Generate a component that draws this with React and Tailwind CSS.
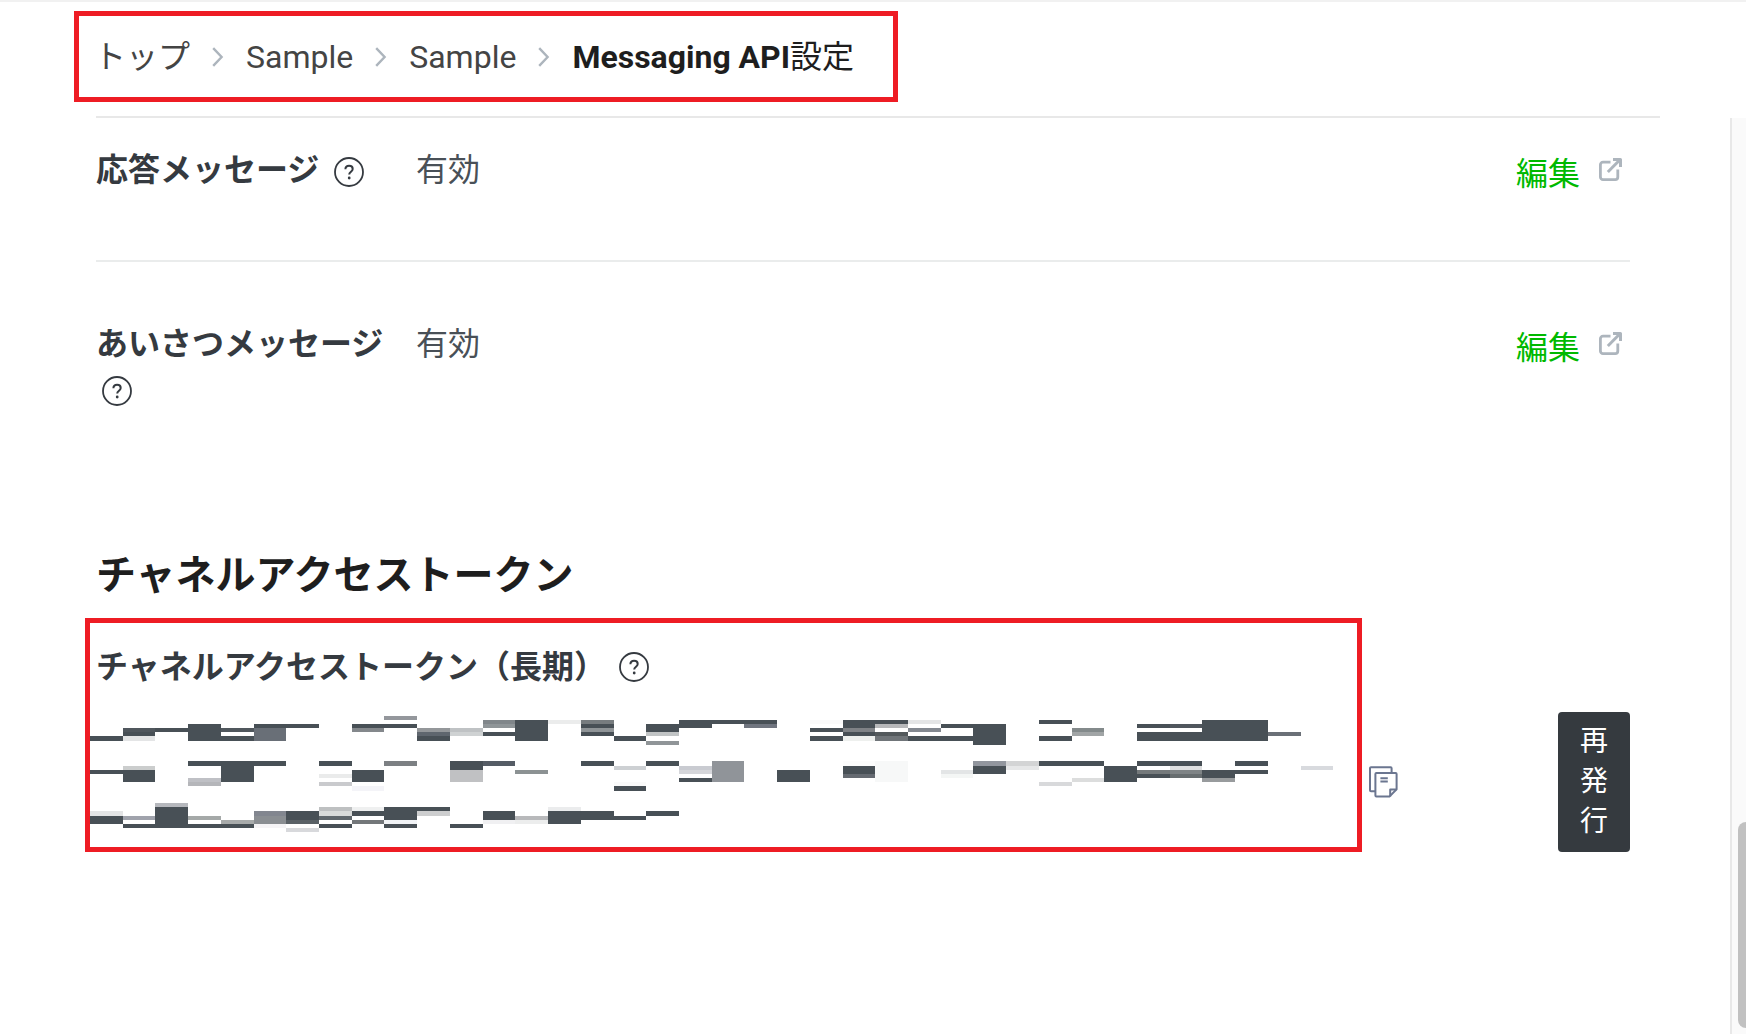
import React from "react";

const D = "#485056";

// Redaction mosaic: [first column, column count, top, bottom, colour]
const MOSAIC = [
  // first line
  [9, 1, 0, 4, "#94979c"],
  [1, 1, 12, 16, "#50575d"], [1, 1, 16, 20, D], [1, 1, 20, 25, "#e4e5e6"],
  [0, 1, 20, 25, D], [2, 1, 12, 16, D], [3, 1, 8, 25, D],
  [4, 1, 12, 16, "#50575d"], [4, 1, 20, 25, D],
  [5, 2, 8, 12, D], [5, 1, 12, 25, "#696f77"],
  [8, 2, 8, 12, D], [8, 1, 12, 16, "#84888c"],
  [10, 1, 12, 16, "#94979a"], [10, 1, 16, 20, "#5f666e"], [10, 1, 20, 25, D],
  [11, 1, 12, 16, "#bfc2c4"], [11, 1, 16, 20, "#cfd2d3"],
  [12, 1, 4, 8, "#80868a"], [12, 1, 8, 12, "#8f9598"], [12, 1, 16, 20, D],
  [13, 1, 4, 25, D], [14, 1, 4, 8, "#ebecec"],
  [15, 1, 4, 8, "#777c7f"], [15, 1, 8, 12, D], [15, 1, 12, 16, "#8f9497"], [15, 1, 16, 20, D],
  [16, 1, 20, 25, D],
  [17, 1, 8, 16, D], [17, 1, 16, 20, "#c1c4c5"], [17, 1, 25, 29, "#909598"],
  [18, 3, 4, 8, D], [18, 1, 8, 12, D], [20, 1, 8, 12, "#70757f"],
  [22, 1, 4, 8, "#fafafa"], [22, 1, 12, 16, D], [22, 1, 20, 25, D],
  [23, 1, 4, 12, D], [23, 1, 12, 16, "#7f8286"], [23, 1, 16, 20, D], [23, 1, 20, 25, "#eef0ee"],
  [24, 1, 4, 8, D], [24, 1, 8, 12, "#b7b8ba"], [24, 1, 16, 20, "#53595c"], [24, 1, 20, 25, "#707579"],
  [25, 1, 4, 8, "#e4e5e6"], [25, 1, 12, 16, "#838890"], [25, 2, 20, 25, D],
  [26, 1, 8, 12, D], [27, 1, 8, 29, D],
  [29, 1, 4, 8, D], [29, 1, 20, 25, D],
  [30, 1, 12, 16, "#838a8b"], [30, 1, 16, 20, "#a1a5a6"],
  [32, 1, 8, 12, D], [33, 1, 8, 12, "#50565d"], [32, 2, 16, 25, D],
  [34, 2, 4, 25, D], [36, 1, 16, 20, "#6b7077"],
  // second line
  [0, 1, 54, 58, D], [1, 1, 50, 54, "#cbcdcd"], [1, 1, 54, 66, D],
  [3, 3, 45, 50, D], [4, 1, 50, 66, D], [3, 1, 62, 66, "#bfc0c5"], [3, 1, 66, 70, "#b5b6ba"],
  [7, 1, 45, 50, D], [7, 1, 58, 62, "#eaebeb"], [7, 1, 66, 70, "#c9cacd"],
  [8, 1, 54, 66, D], [8, 1, 70, 75, "#f4f4f8"], [9, 1, 45, 50, "#7c8083"],
  [11, 1, 45, 54, D], [11, 1, 54, 66, "#c0c1c3"], [12, 1, 45, 50, "#555c65"],
  [13, 1, 54, 58, "#8c9293"], [15, 1, 45, 50, D],
  [16, 1, 50, 54, "#cdd0d3"], [16, 1, 66, 70, "#fafafa"], [16, 1, 70, 75, D],
  [17, 1, 45, 50, D], [18, 1, 50, 54, "#c9cbd1"], [18, 1, 54, 58, "#d5d6da"], [18, 1, 62, 66, D],
  [19, 1, 45, 66, "#909499"], [21, 1, 54, 66, D],
  [23, 1, 45, 50, "#fcfcfc"], [23, 1, 50, 58, D], [23, 1, 58, 62, "#656a71"],
  [24, 1, 45, 66, "#f7f8f8"], [26, 1, 54, 58, "#e3e5e6"], [26, 1, 58, 62, "#f4f6f5"],
  [27, 1, 45, 50, "#92969e"], [27, 1, 50, 58, D],
  [28, 1, 45, 50, "#d3d4d5"], [28, 1, 50, 54, "#e6e7e8"],
  [29, 2, 45, 50, D], [29, 1, 66, 70, "#d8d9db"], [30, 1, 62, 66, "#dcdddd"],
  [31, 1, 50, 66, D],
  [32, 2, 45, 50, D], [32, 1, 54, 58, "#74797b"], [32, 1, 58, 62, D],
  [33, 1, 50, 54, "#dedfe0"], [33, 1, 54, 58, "#7f8486"], [33, 1, 58, 62, "#686e70"],
  [34, 1, 54, 62, D], [34, 1, 62, 66, "#989b9d"],
  [35, 1, 45, 50, D], [35, 1, 54, 58, D], [37, 1, 50, 54, "#d8dade"],
  // third line
  [0, 1, 95, 100, "#e3e4e5"], [0, 1, 100, 108, D],
  [1, 1, 100, 104, "#a0a3ac"], [1, 4, 108, 112, D],
  [2, 1, 87, 91, "#b6b8bd"], [2, 1, 91, 108, D],
  [3, 1, 100, 104, "#a5a9a8"], [4, 1, 104, 108, "#a8abab"],
  [5, 1, 95, 100, "#82868f"], [5, 1, 100, 108, "#8a8e92"], [5, 1, 108, 112, "#f5f4f6"],
  [6, 1, 95, 104, D], [6, 1, 104, 108, "#5a6166"], [6, 1, 112, 116, "#d8d9dc"],
  [7, 1, 91, 95, "#bec0c1"], [7, 1, 95, 100, "#d9dbda"], [7, 1, 100, 104, "#60676c"], [7, 1, 108, 112, D],
  [8, 1, 91, 95, "#eff0f0"], [8, 1, 95, 100, D], [8, 1, 104, 108, "#73777a"],
  [9, 1, 91, 104, D], [9, 1, 104, 108, "#f1f3f6"], [9, 1, 108, 112, D],
  [10, 1, 91, 95, D], [10, 1, 95, 100, "#cdcecf"], [11, 1, 108, 112, D],
  [12, 1, 95, 104, D], [12, 1, 104, 108, "#f0f0f2"],
  [13, 1, 100, 104, "#b8b9bb"], [13, 1, 104, 108, "#eceded"],
  [14, 1, 91, 95, "#ebeced"], [14, 1, 95, 108, D],
  [15, 1, 95, 104, D], [16, 1, 100, 104, D], [17, 1, 95, 100, D],
];

const colX = (i) => Math.round(i * 32.72);

function Mosaic() {
  return (
    <svg width="1244" height="116" viewBox="0 0 1244 116" shapeRendering="crispEdges" className="block max-w-none" role="img" aria-label="Redacted token">
      {MOSAIC.map(([c, n, top, bottom, fill], i) => (
        <rect key={i} x={colX(c)} y={top} width={colX(c + n) - colX(c)} height={bottom - top} fill={fill} />
      ))}
    </svg>
  );
}

function Chevron() {
  return (
    <svg width="12" height="20" viewBox="0 0 12 20" fill="none" stroke="#adb5bd" strokeWidth="2.4" aria-hidden="true">
      <path d="M1.2 1.2 9.6 10 1.2 18.8" />
    </svg>
  );
}

function Help({ className }) {
  return (
    <button type="button" aria-label="ヘルプ" className={className}>
      <svg width="30" height="30" viewBox="0 0 30 30" fill="none" stroke="#353a40" strokeWidth="2" className="block">
        <circle cx="15" cy="15" r="14" strokeWidth="1.8" />
        <path d="M11.4 12.2c0-2.1 1.5-3.5 3.7-3.5s3.6 1.3 3.6 3.2c0 2.6-3.5 2.9-3.5 5.6" />
        <circle cx="15.2" cy="21" r="1.4" fill="#353a40" stroke="none" />
      </svg>
    </button>
  );
}

function EditLink() {
  return (
    <a href="#edit" className="mr-2 flex gap-[19px] leading-[48px] text-[#00b900]">
      <span className="pt-1">編集</span>
      <svg width="23" height="23" viewBox="0 0 23 23" fill="none" stroke="#adb5bd" strokeWidth="2.8" strokeLinejoin="round" className="mt-3" aria-hidden="true">
        <path d="M11.5 4.2H4a2.6 2.6 0 0 0-2.6 2.6v12.2A2.6 2.6 0 0 0 4 21.6h12.2a2.6 2.6 0 0 0 2.6-2.6v-7.6" />
        <path d="M8.8 14 20.5 2.3" strokeWidth="3" />
        <path d="M14 1.5h7.5V9" strokeWidth="3" />
      </svg>
    </a>
  );
}

function CopyIcon() {
  return (
    <svg width="29" height="32" viewBox="0 0 29 32" fill="none" stroke="#6b7690" strokeWidth="2" strokeLinejoin="round" className="block">
      <path d="M6.5 25.2H2a1 1 0 0 1-1-1V2.2a1 1 0 0 1 1-1h19.6a1 1 0 0 1 1 1v4.6" />
      <path d="M7.4 7h19.2a1 1 0 0 1 1 1v15.2l-7.2 7.4h-13a1 1 0 0 1-1-1V8a1 1 0 0 1 1-1Z" />
      <path d="M27.4 23.4h-6.2v7" />
      <path d="M11.4 12.2h7.4M11.4 15.6h7.4" strokeLinejoin="miter" />
    </svg>
  );
}

function SettingRow({ label, className, helpClass }) {
  return (
    <div className={"flex items-start " + className}>
      <div className="mr-8 flex w-72 flex-wrap items-center">
        <h3 className="font-bold leading-[48px] text-[#353a40]">{label}</h3>
        <Help className={helpClass} />
      </div>
      <p className="grow leading-[48px] text-[#495057]">有効</p>
      <EditLink />
    </div>
  );
}

export default function App() {
  return (
    <div className="flex h-screen flex-col overflow-hidden bg-white text-[32px] [font-family:Roboto,'Noto_Sans_CJK_JP',sans-serif]">
      <header className="border-t-2 border-[#f1f1f1] pt-[9px]">
        <nav aria-label="breadcrumb" className="ml-[74px] w-fit border-5 border-[#ee1c24]">
          <ol className="flex h-[81px] items-center gap-[22px] pl-[15px] pr-[39px] text-[#444444]">
            <li><a href="#top">トップ</a></li>
            <li><Chevron /></li>
            <li><a href="#provider">Sample</a></li>
            <li><Chevron /></li>
            <li><a href="#channel">Sample</a></li>
            <li><Chevron /></li>
            <li aria-current="page" className="font-bold text-[#1e1e1e]">
              Messaging API<span className="font-normal">設定</span>
            </li>
          </ol>
        </nav>
        <div className="ml-24 mr-[86px] mt-3.5 h-0.5 bg-[#e8e8e8]" />
      </header>

      <div className="flex min-h-0 grow">
        <main className="min-w-0 grow pr-[100px]">
          <div className="ml-24">
            <SettingRow label="応答メッセージ" className="h-36 border-b-2 border-[#eaecec] pt-7" helpClass="ml-[15px] mt-1" />
            <SettingRow label="あいさつメッセージ" className="pt-[58px]" helpClass="ml-1.5 mt-2" />
            <h2 className="mt-[140px] text-[40px] font-bold leading-[60px] text-[#1e1e1e]">チャネルアクセストークン</h2>
          </div>

          <section className="ml-[85px] mt-3 flex items-end">
            <div className="h-[234px] min-w-0 grow overflow-hidden border-5 border-[#ee1c24] pt-5">
              <div className="flex items-center pl-1.5">
                <h3 className="font-bold leading-[48px] text-[#353a40]">チャネルアクセストークン（長期）</h3>
                <Help className="ml-[13px]" />
              </div>
              <div className="mt-[25px]"><Mosaic /></div>
            </div>
            <button type="button" aria-label="コピー" className="mb-[54px] ml-[7px] shrink-0"><CopyIcon /></button>
            <button type="button" className="ml-40 w-[72px] shrink-0 rounded bg-[#353a3f] px-5 py-2.5 text-[28px] leading-10 text-white">
              再発行
            </button>
          </section>
        </main>

        <div className="flex w-4 shrink-0 flex-col justify-end overflow-hidden border-l-2 border-[#e8e8e8] bg-[#fafafa] pb-1.5 pl-1.5" aria-hidden="true">
          <div className="h-[206px] w-4 rounded-lg bg-[#c1c1c1]" />
        </div>
      </div>
    </div>
  );
}
